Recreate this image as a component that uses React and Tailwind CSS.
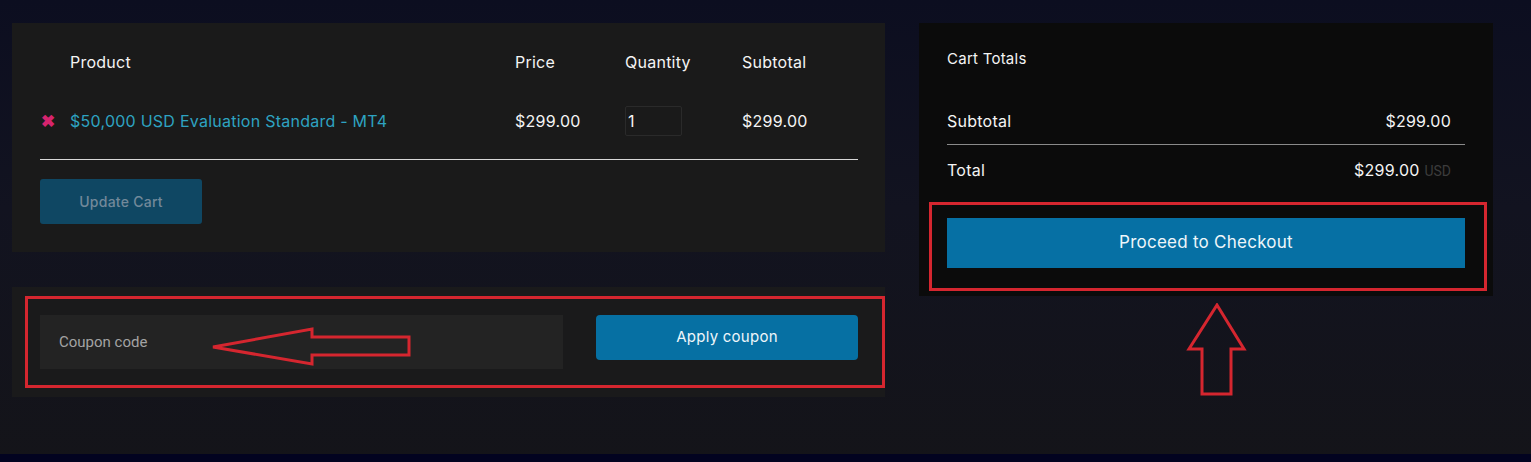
import React from "react";

const font = { fontFamily: "Inter, 'Open Sans', sans-serif", letterSpacing: "0.25px" };

const CartTable = () => (
  <div className="bg-[#1a1a1a] pl-[28px] pr-[27px] pt-[27px] pb-[28px]" style={font}>
    {/* header */}
    <div className="grid grid-cols-[475px_110px_117px_1fr] h-[24px] items-center text-[16px] text-[#f4f4f4]">
      <div className="pl-[30px]">Product</div>
      <div>Price</div>
      <div>Quantity</div>
      <div>Subtotal</div>
    </div>

    {/* row */}
    <div className="grid grid-cols-[475px_110px_117px_1fr] h-[30px] mt-[32px] items-center text-[16px] text-[#f4f4f4]">
      <div className="flex items-center">
        <span className="w-[30px] pl-[1px] text-[#d6246e] text-[17px] font-bold leading-none">✖</span>
        <span className="text-[#2ea3c1]">$50,000 USD Evaluation Standard - MT4</span>
      </div>
      <div>$299.00</div>
      <div>
        <div className="w-[57px] h-[30px] border border-[#2a2a2a] rounded-[2px] flex items-center pl-[2px]">1</div>
      </div>
      <div>$299.00</div>
    </div>

    <div className="mt-[23px] h-px bg-[#d8d8d8]" />

    <button className="mt-[19px] w-[162px] h-[45px] rounded-[3px] bg-[#0f4763] text-[14px] font-medium text-[#72899a]">
      Update Cart
    </button>
  </div>
);

const CouponBox = () => (
  <div className="relative mt-[35px] bg-[#1a1a1b] pl-[28px] pr-[27px] py-[28px] flex items-start justify-between">
    <div className="w-[523px] h-[54px] bg-[#232323] flex items-center pl-[19px] text-[15px] text-[#a3a3a3]" style={{ fontFamily: "Roboto, 'Liberation Sans', sans-serif" }}>
      Coupon code
    </div>
    <button className="w-[262px] h-[45px] rounded-[4px] bg-[#0670a3] text-[15px] text-[#eef6fa]" style={font}>
      Apply coupon
    </button>

    {/* annotations */}
    <div className="absolute left-[13px] top-[9px] w-[860px] h-[92px] border-[3px] border-[#d5262f] pointer-events-none" />
    <svg className="absolute left-0 top-0 pointer-events-none" width="873" height="110" viewBox="0 0 873 110">
      <polygon
        points="213,347 312,329 312,337 409,337 409,355 312,355 312,364"
        transform="translate(-12 -287)"
        fill="none"
        stroke="#d5262f"
        strokeWidth="3"
      />
    </svg>
  </div>
);

const CartTotals = () => (
  <div className="relative w-full bg-[#0b0b0b] px-[28px] pt-[25px] pb-[28px] text-[#f4f4f4]" style={font}>
    <div className="text-[15px] h-[22px] flex items-center">Cart Totals</div>
    <div className="mt-[40px] h-[22px] flex items-center justify-between pr-[14px] text-[16px]">
      <span>Subtotal</span>
      <span>$299.00</span>
    </div>
    <div className="mt-[12px] h-px bg-[#8a8a8a]" />
    <div className="mt-[14px] h-[22px] flex items-center justify-between pr-[14px] text-[16px]">
      <span>Total</span>
      <span>
        $299.00{" "}
        <span className="text-[#3c3c3c] text-[14px]" style={{ fontFamily: "Roboto, 'Liberation Sans', sans-serif", letterSpacing: 0 }}>
          USD
        </span>
      </span>
    </div>
    <button className="mt-[37px] w-full h-[50px] bg-[#0670a4] text-[17px] text-[#eef6fa]">
      Proceed to Checkout
    </button>
    <div className="absolute left-[10px] top-[179px] w-[558px] h-[89px] border-[3px] border-[#d5262f] pointer-events-none" />
  </div>
);

export default function App() {
  return (
    <div className="w-[1531px] h-[462px] overflow-hidden bg-[linear-gradient(180deg,#0c0e20_0%,#121320_45%,#141419_100%)] flex flex-col">
      <div className="flex-1 flex items-start pt-[23px] pl-[12px] gap-[34px]">
        <div className="w-[873px]">
          <CartTable />
          <CouponBox />
        </div>
        <div className="w-[574px] flex flex-col">
          <CartTotals />
          <svg className="mt-[7px] ml-[267px]" width="62" height="94" viewBox="0 0 62 94">
            <polygon
              points="31,2 58,46 45,46 45,91 16,91 16,46 3,46"
              fill="none"
              stroke="#d5262f"
              strokeWidth="3"
            />
          </svg>
        </div>
      </div>
      <div className="h-[8px] bg-[#020320]" />
    </div>
  );
}
